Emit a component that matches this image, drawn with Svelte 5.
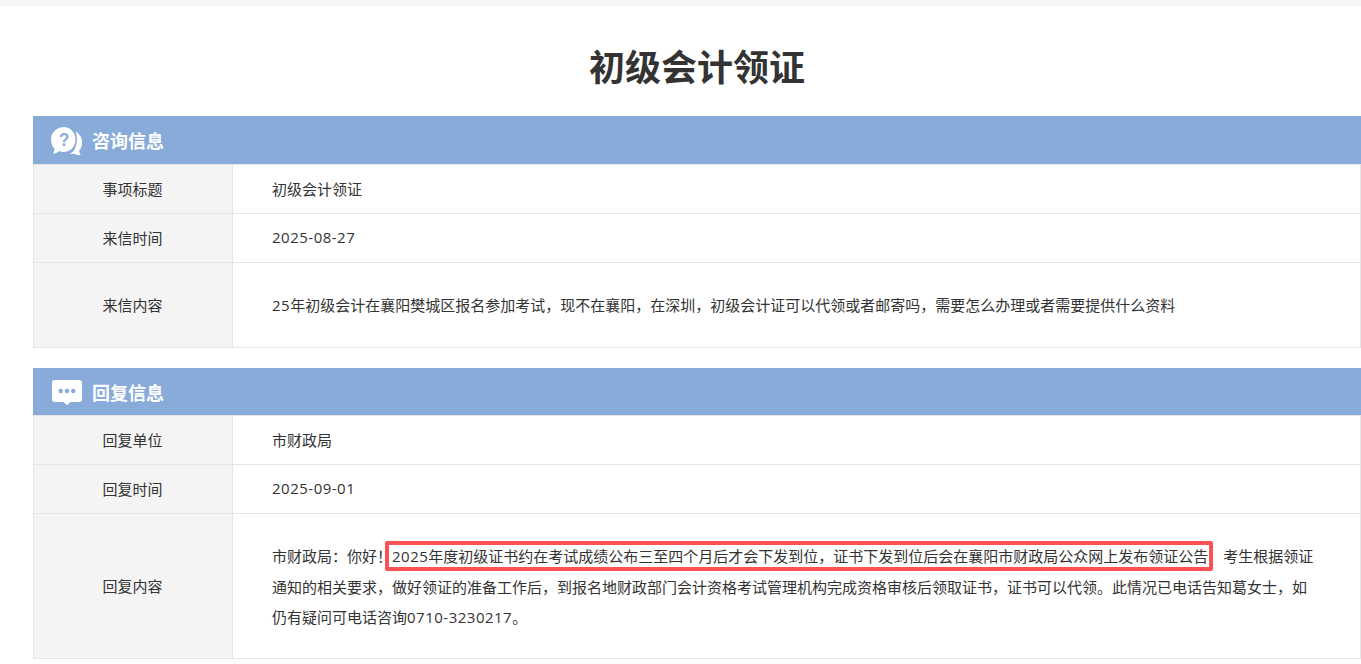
<script>
  const askRows = [
    { label: "事项标题", text: "初级会计领证" },
    { label: "来信时间", num: "2025-08-27", text: "" },
    { label: "来信内容", num: "25", text: "年初级会计在襄阳樊城区报名参加考试，现不在襄阳，在深圳，初级会计证可以代领或者邮寄吗，需要怎么办理或者需要提供什么资料", tall: true }
  ];
  const replyRows = [
    { label: "回复单位", text: "市财政局" },
    { label: "回复时间", num: "2025-09-01", text: "" }
  ];
</script>

<div class="topbar"></div>
<main class="page">
  <h1>初级会计领证</h1>

  <section class="block">
    <header class="head">
      <svg class="icon ask" width="32" height="30" viewBox="0 0 34 30" preserveAspectRatio="none">
        <path d="M26 5.500c4.500 2.300 7 6 7 10.700 0 3.500-1.200 6.300-3 8.300-.2 1.500.5 3 1.800 4.500-2.800.3-5.300-.2-7.300-1.500-1.400.5-2.800.7-4.400.6 6.600-3.200 9.500-14 5.900-22.600z" fill="#fff"/>
        <path d="M13.500 1C20.500 1 26 6.500 26 13.500S20.500 26 13.500 26c-1.800 0-3.400-.3-4.900-1-1.700 1.700-3.900 2.600-6.600 2.600 1.200-1.500 1.700-3.200 1.500-5.100C1.300 20.300 0 17.100 0 13.500 0 6.500 6.500 1 13.500 1z" fill="#fff"/>
        <text x="14" y="20" text-anchor="middle" class="mark">?</text>
      </svg>
      <span>咨询信息</span>
    </header>
    {#each askRows as row}
      <div class="row" class:tall={row.tall}>
        <div class="label">{row.label}</div>
        <div class="value"><span><span class="num">{row.num ?? ""}</span>{row.text}</span></div>
      </div>
    {/each}
  </section>

  <section class="block second">
    <header class="head short">
      <svg class="icon" width="30" height="26" viewBox="0 0 31 26" preserveAspectRatio="none">
        <path d="M3 1h25a3 3 0 0 1 3 3v16a3 3 0 0 1-3 3h-9l-3.500 3.500L12 23H3a3 3 0 0 1-3-3V4a3 3 0 0 1 3-3z" fill="#fff"/>
        <circle cx="9" cy="12" r="2.300" fill="#88abd9"/>
        <circle cx="15.500" cy="12" r="2.300" fill="#88abd9"/>
        <circle cx="22" cy="12" r="2.300" fill="#88abd9"/>
      </svg>
      <span>回复信息</span>
    </header>
    {#each replyRows as row}
      <div class="row">
        <div class="label">{row.label}</div>
        <div class="value"><span><span class="num">{row.num ?? ""}</span>{row.text}</span></div>
      </div>
    {/each}
    <div class="row reply">
      <div class="label">回复内容</div>
      <div class="value long">市财政局：你好！<span class="mark-box"><span class="num">2025</span>年度初级证书约在考试成绩公布三至四个月后才会下发到位，证书下发到位后会在襄阳市财政局公众网上发布领证公告</span>　考生根据领证通知的相关要求，做好领证的准备工作后，到报名地财政部门会计资格考试管理机构完成资格审核后领取证书，证书可以代领。此情况已电话告知葛女士，如仍有疑问可电话咨询<span class="num">0710-3230217</span>。</div>
    </div>
  </section>
</main>

<style>
  :global(body) {
    background: #fff;
    overflow: hidden;
  }
  .topbar {
    height: 6px;
    background: #f5f5f5;
  }
  .page {
    padding-left: 33px;
    font-family: "Open Sans", "Noto Sans CJK SC", sans-serif;
    color: #333;
  }
  h1 {
    margin: 0;
    height: 110px;
    line-height: 124px;
    font-size: 36px;
    font-weight: 700;
    text-align: center;
    color: #333;
  }
  .block.second {
    margin-top: 20px;
  }
  .head {
    display: flex;
    align-items: center;
    gap: 9px;
    height: 48px;
    padding-left: 18px;
    background: #88abd9;
    border-bottom: 1px solid #e5e5e5;
    color: #fff;
    font-size: 18px;
    font-weight: 700;
  }
  .head.short {
    height: 47px;
    gap: 10px;
    padding-left: 19px;
  }
  .icon {
    flex: none;
  }
  .icon.ask {
    margin-top: 2px;
  }
  .mark {
    font-family: "Liberation Sans", sans-serif;
    font-size: 18px;
    font-weight: 700;
    fill: #88abd9;
  }
  .row {
    display: flex;
    border-bottom: 1px solid #e5e5e5;
    border-left: 1px solid #e5e5e5;
    border-right: 1px solid #e5e5e5;
    font-size: 15px;
    min-height: 48px;
  }
  .row.tall {
    min-height: 84px;
  }
  .row.reply {
    min-height: 144px;
  }
  .label {
    flex: none;
    display: flex;
    align-items: center;
    justify-content: center;
    box-sizing: border-box;
    width: 199px;
    padding-right: 1px;
    padding-bottom: 2px;
    background: #f4f4f4;
    border-right: 1px solid #e5e5e5;
  }
  .value {
    flex: 1;
    display: flex;
    align-items: center;
    padding: 0 39px 2px;
  }
  .value.long {
    display: block;
    padding-top: 27px;
    padding-right: 46px;
    line-height: 30.500px;
  }
  .num {
    letter-spacing: 0.5px;
  }
  .mark-box {
    position: relative;
  }
  .mark-box::after {
    content: "";
    position: absolute;
    left: -7px;
    right: -5px;
    top: -5px;
    bottom: -5px;
    border: 4px solid #fa5252;
    border-radius: 2px;
    pointer-events: none;
  }
</style>
